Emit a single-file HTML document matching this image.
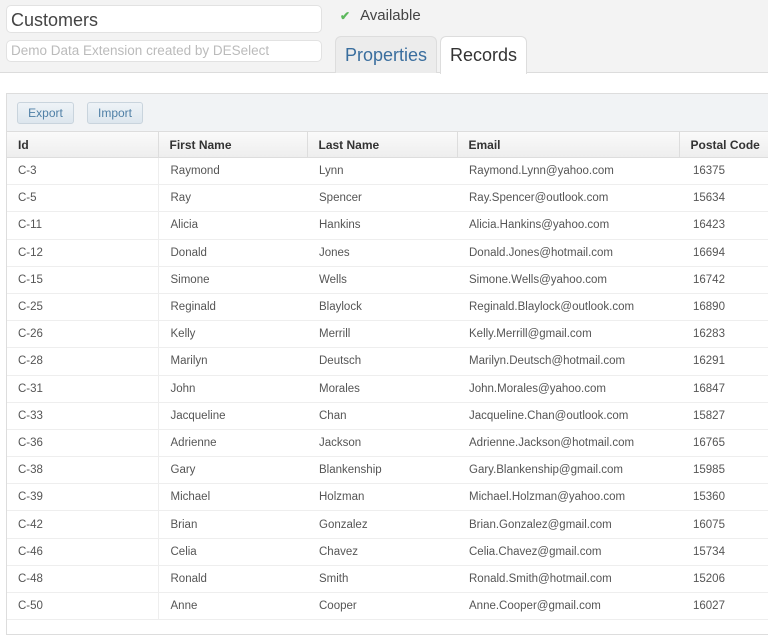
<!DOCTYPE html>
<html><head><style>
body{margin:0;width:768px;height:622px;overflow:hidden;background:#fff;font-family:"Liberation Sans",Arial,sans-serif;}
.top{position:absolute;left:0;top:0;width:768px;height:72px;background:#f3f3f3;border-bottom:1px solid #dcdcdc;}
.in1{position:absolute;left:6px;top:5px;width:316px;height:28px;background:#fff;border:1px solid #e2e2e2;border-radius:5px;font-size:18px;color:#444;line-height:28px;padding-left:4px;box-sizing:border-box;}
.in2{position:absolute;left:6px;top:40px;width:316px;height:22px;background:#fff;border:1px solid #e2e2e2;border-radius:5px;font-size:13.5px;color:#bbb;line-height:20px;padding-left:4px;box-sizing:border-box;}
.avail{position:absolute;left:340px;top:7px;font-size:15px;color:#444;}
.avail b{color:#5cb85c;font-size:12px;margin-right:10px;}
.tab{position:absolute;top:36px;height:37px;border:1px solid #ddd;border-bottom:none;border-radius:6px 6px 0 0;font-size:18px;line-height:36px;text-align:center;box-sizing:border-box;}
.t1{left:335px;width:102px;background:#ececec;color:#3a6e9e;}
.t2{left:440px;width:87px;background:#fff;color:#333;height:38px;}
.panel{position:absolute;left:6px;top:93px;width:770px;height:540px;border:1px solid #ddd;background:#fff;}
.tool{height:37px;background:#f1f3f5;border-bottom:1px solid #ddd;position:relative;}
.btn{position:absolute;top:8px;height:22px;border:1px solid #c9d4dd;border-radius:3px;background:linear-gradient(#eef3f7,#dde6ee);font-size:12px;color:#4f7fa6;line-height:21px;text-align:center;box-sizing:border-box;}
table{border-collapse:collapse;width:770px;table-layout:fixed;font-size:11.5px;color:#555;}
th{text-align:left;font-weight:bold;font-size:12px;color:#333;height:25px;background:linear-gradient(#fafafa,#eee);border-bottom:1px solid #ddd;border-left:1px solid #ddd;padding:0 0 0 11px;white-space:nowrap;}
th:first-child{border-left:none;}
td{height:26.2px;border-bottom:1px solid #eee;padding:0 0 0 12px;white-space:nowrap;}
td:first-child{border-right:1px solid #eee;padding-left:11px}
td:last-child{padding-left:14px}
</style></head><body>
<div class="top">
<div class="in1">Customers</div>
<div class="in2">Demo Data Extension created by DESelect</div>
<div class="avail"><b>✔</b>Available</div>
<div class="tab t1">Properties</div>
<div class="tab t2">Records</div>
</div>
<div class="panel">
<div class="tool"><div class="btn" style="left:10px;width:57px">Export</div><div class="btn" style="left:80px;width:56px">Import</div></div>
<table>
<colgroup><col style="width:151px"><col style="width:149px"><col style="width:150px"><col style="width:222px"><col></colgroup>
<tr><th>Id</th><th>First Name</th><th>Last Name</th><th>Email</th><th>Postal Code</th></tr>
<tr><td>C-3</td><td>Raymond</td><td>Lynn</td><td>Raymond.Lynn@yahoo.com</td><td>16375</td></tr>
<tr><td>C-5</td><td>Ray</td><td>Spencer</td><td>Ray.Spencer@outlook.com</td><td>15634</td></tr>
<tr><td>C-11</td><td>Alicia</td><td>Hankins</td><td>Alicia.Hankins@yahoo.com</td><td>16423</td></tr>
<tr><td>C-12</td><td>Donald</td><td>Jones</td><td>Donald.Jones@hotmail.com</td><td>16694</td></tr>
<tr><td>C-15</td><td>Simone</td><td>Wells</td><td>Simone.Wells@yahoo.com</td><td>16742</td></tr>
<tr><td>C-25</td><td>Reginald</td><td>Blaylock</td><td>Reginald.Blaylock@outlook.com</td><td>16890</td></tr>
<tr><td>C-26</td><td>Kelly</td><td>Merrill</td><td>Kelly.Merrill@gmail.com</td><td>16283</td></tr>
<tr><td>C-28</td><td>Marilyn</td><td>Deutsch</td><td>Marilyn.Deutsch@hotmail.com</td><td>16291</td></tr>
<tr><td>C-31</td><td>John</td><td>Morales</td><td>John.Morales@yahoo.com</td><td>16847</td></tr>
<tr><td>C-33</td><td>Jacqueline</td><td>Chan</td><td>Jacqueline.Chan@outlook.com</td><td>15827</td></tr>
<tr><td>C-36</td><td>Adrienne</td><td>Jackson</td><td>Adrienne.Jackson@hotmail.com</td><td>16765</td></tr>
<tr><td>C-38</td><td>Gary</td><td>Blankenship</td><td>Gary.Blankenship@gmail.com</td><td>15985</td></tr>
<tr><td>C-39</td><td>Michael</td><td>Holzman</td><td>Michael.Holzman@yahoo.com</td><td>15360</td></tr>
<tr><td>C-42</td><td>Brian</td><td>Gonzalez</td><td>Brian.Gonzalez@gmail.com</td><td>16075</td></tr>
<tr><td>C-46</td><td>Celia</td><td>Chavez</td><td>Celia.Chavez@gmail.com</td><td>15734</td></tr>
<tr><td>C-48</td><td>Ronald</td><td>Smith</td><td>Ronald.Smith@hotmail.com</td><td>15206</td></tr>
<tr><td>C-50</td><td>Anne</td><td>Cooper</td><td>Anne.Cooper@gmail.com</td><td>16027</td></tr>
</table>
</div>
</body></html>
